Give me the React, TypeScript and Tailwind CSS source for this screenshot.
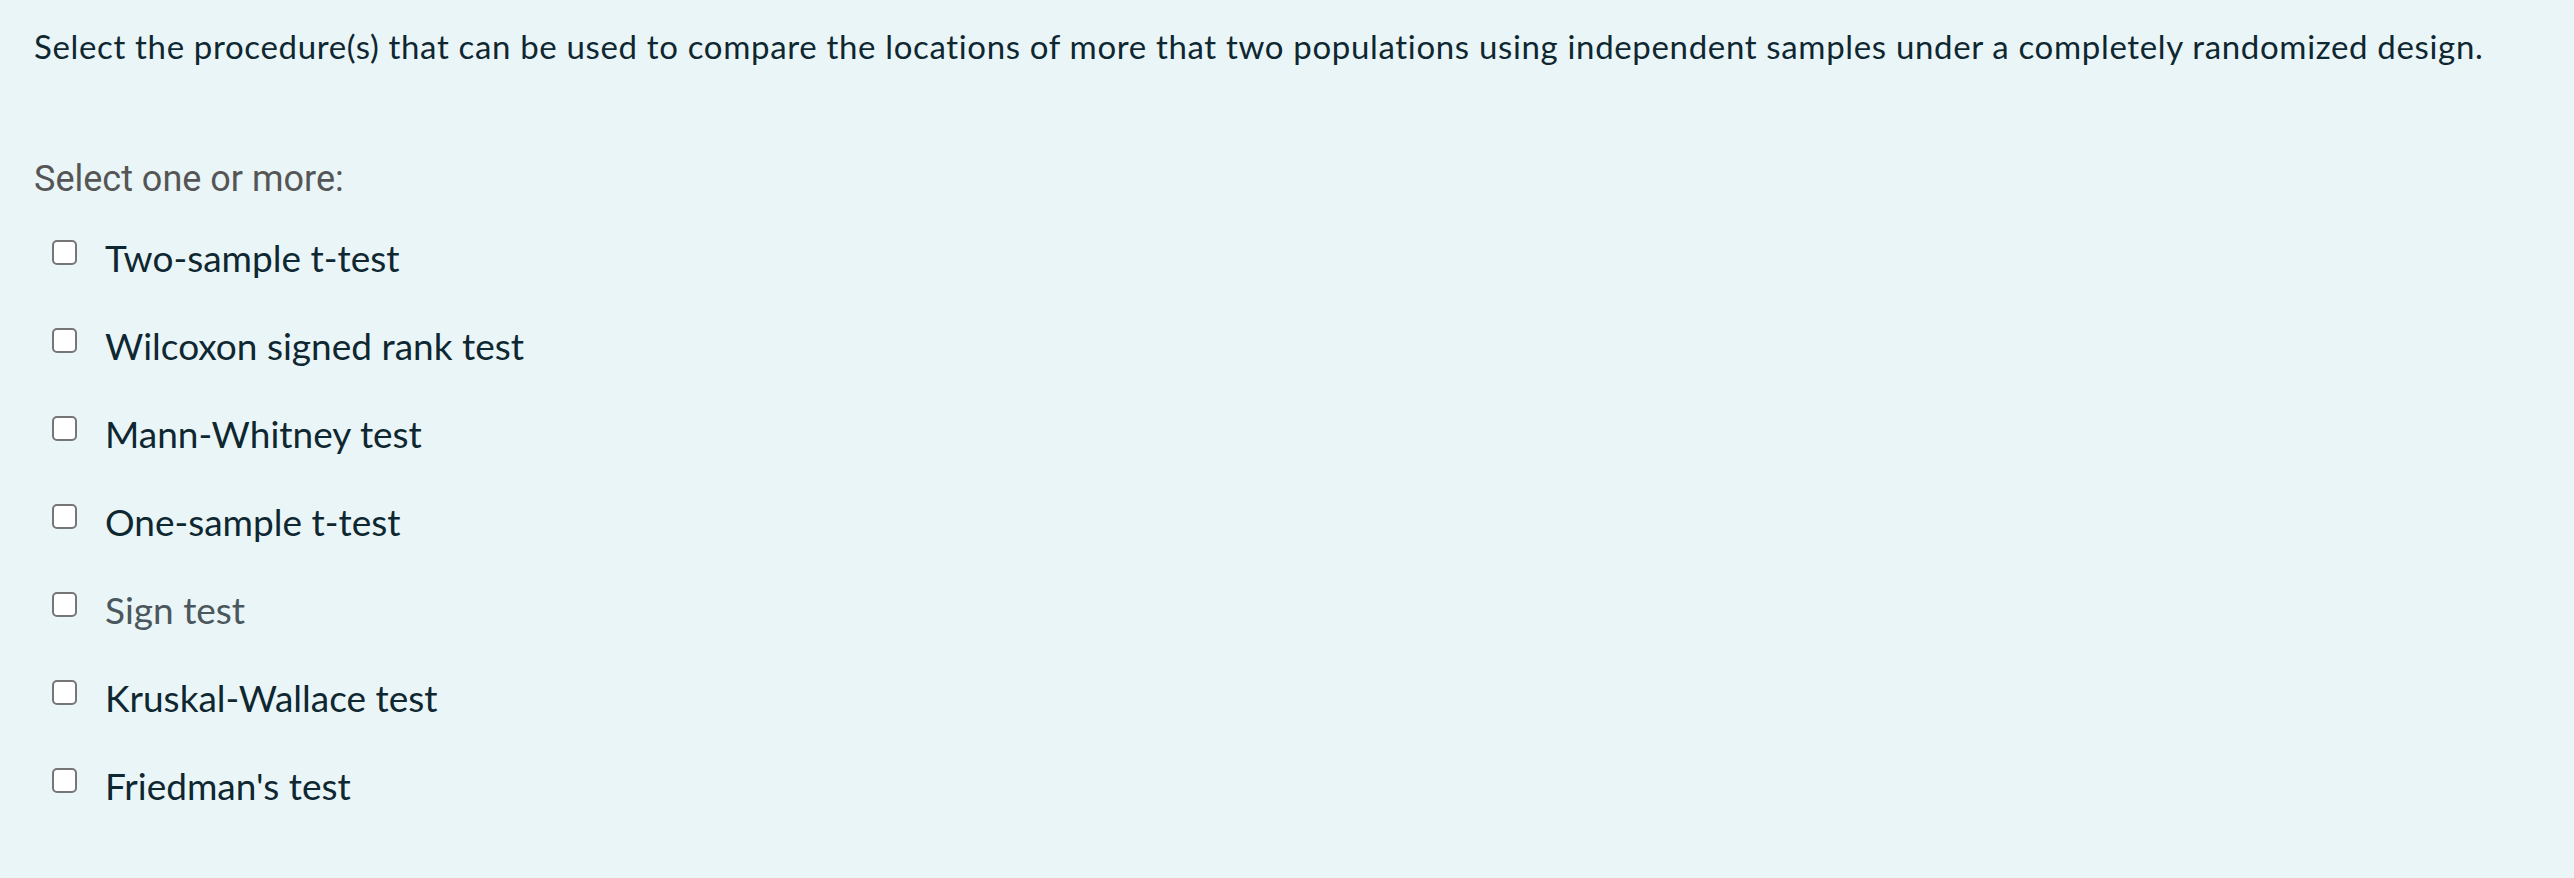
import React from "react";

const options = [
  { label: "Two-sample t-test" },
  { label: "Wilcoxon signed rank test" },
  { label: "Mann-Whitney test" },
  { label: "One-sample t-test" },
  { label: "Sign test", muted: true },
  { label: "Kruskal-Wallace test" },
  { label: "Friedman's test" },
];

export default function App() {
  return (
    <div className="min-h-screen w-full bg-[#eaf5f7] pl-[34px] pt-[28px]">
      <p className="font-['Lato',sans-serif] text-[33px] leading-[37px] tracking-[0.66px] text-[#0e2731]">
        Select the procedure(s) that can be used to compare the locations of more that two populations using independent samples under a completely randomized design.
      </p>

      <div className="mt-[93px] font-['Roboto',sans-serif] text-[36px] leading-[42px] text-[#555555]">
        Select one or more:
      </div>

      <div className="mt-[14px] flex flex-col">
        {options.map((o, i) => (
          <label key={i} className="flex h-[88px] items-start">
            <input
              type="checkbox"
              className="ml-[18px] mt-[26px] h-[25px] w-[25px] shrink-0 appearance-none rounded-[5px] border-2 border-[#767676] bg-white"
            />
            <span
              className={`ml-[28px] font-['Lato',sans-serif] text-[37px] leading-[88px] ${
                o.muted ? "text-[#4b575c]" : "text-[#0e2731]"
              }`}
            >
              {o.label}
            </span>
          </label>
        ))}
      </div>
    </div>
  );
}
